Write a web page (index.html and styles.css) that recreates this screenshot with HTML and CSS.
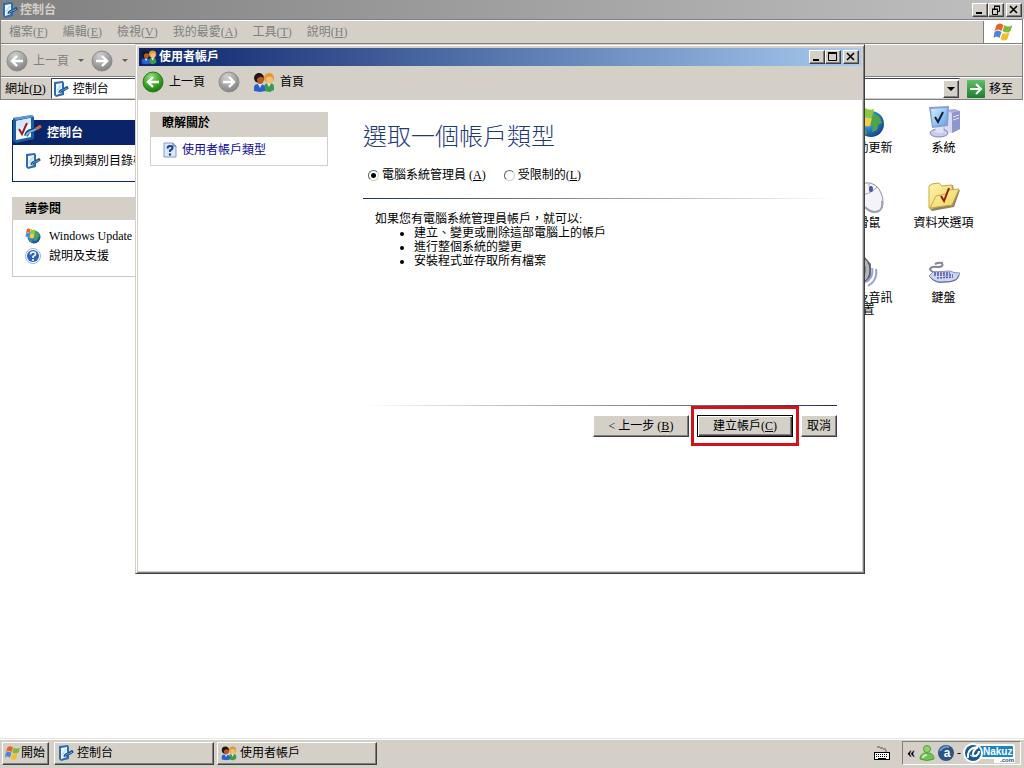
FILE: index.html
```
<!DOCTYPE html>
<html lang="zh-Hant">
<head>
  <meta charset="UTF-8" />
  <meta name="viewport" content="width=device-width, initial-scale=1.0"/>
  <title>使用者帳戶</title>
  <link rel="stylesheet" href="styles.css">
</head>
<body>
  <!-- Shared icons -->
  <svg class="defs" width="0" height="0" aria-hidden="true">
    <defs>
      <radialGradient id="greenBall" cx="40%" cy="25%" r="80%">
        <stop offset="0" stop-color="#9be07c"/><stop offset="0.5" stop-color="#3fae2c"/><stop offset="1" stop-color="#14700f"/>
      </radialGradient>
      <radialGradient id="grayBall" cx="40%" cy="25%" r="80%">
        <stop offset="0" stop-color="#d2d2d2"/><stop offset="0.5" stop-color="#a8a8a8"/><stop offset="1" stop-color="#7c7c7c"/>
      </radialGradient>
      <radialGradient id="blueBall" cx="35%" cy="30%" r="80%">
        <stop offset="0" stop-color="#8fd0f5"/><stop offset="0.5" stop-color="#2d7fc8"/><stop offset="1" stop-color="#123a80"/>
      </radialGradient>
      <linearGradient id="screen" x1="0" y1="0" x2="1" y2="1">
        <stop offset="0" stop-color="#d5f0ff"/><stop offset="1" stop-color="#58a8ea"/>
      </linearGradient>
      <linearGradient id="folder" x1="0" y1="0" x2="1" y2="1">
        <stop offset="0" stop-color="#fff6b0"/><stop offset="1" stop-color="#f0cf58"/>
      </linearGradient>
      <linearGradient id="goGreen" x1="0" y1="0" x2="0" y2="1">
        <stop offset="0" stop-color="#5fbf66"/><stop offset="1" stop-color="#1a7f2c"/>
      </linearGradient>
      <symbol id="panel" viewBox="0 0 30 30">
        <path d="M1 4 L20 1 L22 3 L22 25 L4 29 L1 27 Z" fill="#1d5c9e"/>
        <path d="M1 4 L20 1 L22 3 L4 6 Z" fill="#5b9bd8"/>
        <path d="M4 7 L19 4 L19 23 L4 26 Z" fill="#f2f8ff"/>
        <path d="M4 7 L19 4 L19 9 L4 17 Z" fill="#d5e8fa"/>
        <path d="M7 15 L10 20 L15 9" fill="none" stroke="#9c1f20" stroke-width="2"/>
        <path d="M14 22 C16 15 20 17 22 16 L28 13" fill="none" stroke="#123f78" stroke-width="4"/>
        <path d="M14 22 C16 16 20 18 24 15" fill="none" stroke="#6fb2e8" stroke-width="2"/>
        <path d="M24 15 L29 12" stroke="#d8643a" stroke-width="3"/>
      </symbol>
      <symbol id="panel-small" viewBox="0 0 16 16">
        <path d="M1 1 L10 0 L11 2 V14 L3 16 L1 14 Z" fill="#2f6cab"/>
        <path d="M3 3 L9 2 V12 L3 14 Z" fill="#eef7ff"/>
        <path d="M4 10 L8 4" stroke="#c3def5" stroke-width="2"/>
        <path d="M7 12 C7 8 10 10 12 8 L15 6" fill="none" stroke="#1d5088" stroke-width="3"/>
        <path d="M7 12 C8 8 10 10 14 7" fill="none" stroke="#79b5e6"/>
      </symbol>
      <symbol id="users" viewBox="0 0 22 20">
        <path d="M11 19 V14 Q12 11 16 11 Q21 11 21 15 V18 L17 20 Z" fill="#3d9a4e"/>
        <path d="M14 11 L16 15 L18 11 Z" fill="#e8f4e8"/>
        <circle cx="16" cy="6" r="5" fill="#e09a2c"/>
        <path d="M13 6 Q16 3 20 6 Q20 12 16 12 Q13 11 13 6" fill="#f3be7c"/>
        <path d="M1 19 V15 Q1 12 6 12 Q11 12 12 15 V19 L7 20 Z" fill="#2a5fcf"/>
        <path d="M5 12 L7 16 L9 12 Z" fill="#dcebff"/>
        <circle cx="6" cy="6" r="5" fill="#24150f"/>
        <path d="M4 7 Q7 3 11 6 Q11 12 7 12 Q4 12 4 7" fill="#b8592a"/>
      </symbol>
      <symbol id="back" viewBox="0 0 22 22">
        <circle cx="11" cy="11" r="10" fill="url(#greenBall)" stroke="#2c7a22"/>
        <path d="M17 11 H6 M11 6 L6 11 L11 16" fill="none" stroke="#fff" stroke-width="2.4"/>
      </symbol>
      <symbol id="back-off" viewBox="0 0 22 22">
        <circle cx="11" cy="11" r="10" fill="url(#grayBall)" stroke="#8c8c8c"/>
        <path d="M17 11 H6 M11 6 L6 11 L11 16" fill="none" stroke="#fff" stroke-width="2.4"/>
      </symbol>
      <symbol id="forward-off" viewBox="0 0 22 22">
        <circle cx="11" cy="11" r="10" fill="url(#grayBall)" stroke="#8c8c8c"/>
        <path d="M5 11 H16 M11 6 L16 11 L11 16" fill="none" stroke="#fff" stroke-width="2.4"/>
      </symbol>
      <symbol id="flag" viewBox="0 0 20 20">
        <path d="M3 3 Q6 0 10 3 L8 9 Q5 6 1 9 Z" fill="#e8622c"/>
        <path d="M11 3 Q15 6 19 3 L17 9 Q13 12 9 9 Z" fill="#7fb93a"/>
        <path d="M1 10 Q4 7 8 10 L6 16 Q3 13 0 16 Z" fill="#4d84d8"/>
        <path d="M9 11 Q12 13 16 10 L14 17 Q11 20 7 17 Z" fill="#f3bd2e"/>
      </symbol>
      <symbol id="globe" viewBox="0 0 32 32">
        <circle cx="18" cy="18" r="13" fill="url(#blueBall)"/>
        <path d="M21 8 Q27 9 29 17 L25 19 L24 24 L19 26 L20 20 L15 17 Z" fill="#4da546"/>
        <path d="M8 22 L13 24 L14 29 Q9 27 8 22" fill="#4da546"/>
        <path d="M4 2 Q7 0 11 2 L10 10 Q6 8 2 10 Z" fill="#e8622c"/>
        <path d="M12 2 Q16 5 21 3 L19 11 Q15 12 11 10 Z" fill="#8dcb34"/>
        <path d="M2 11 Q6 9 10 11 L8 19 Q5 16 1 18 Z" fill="#4a82dd"/>
        <path d="M11 11 Q15 13 19 12 L17 20 Q13 21 9 19 Z" fill="#f5cf3c"/>
      </symbol>
    </defs>
  </svg>

  <div class="explorer">
    <header class="titlebar titlebar-off">
      <svg class="icon16"><use href="#panel-small"/></svg>
      <span class="title">控制台</span>
      <div class="controls">
        <button aria-label="最小化"><svg viewBox="0 0 12 10"><path d="M2 8 H8" stroke="#000" stroke-width="2"/></svg></button>
        <button aria-label="還原"><svg viewBox="0 0 12 10"><path d="M4.5 4 V1.5 H9.500 V6.500 H8 M4 1 H10 M2.500 4.500 H7.500 V9.500 H2.500 Z M2 4 H8" fill="none" stroke="#000"/></svg></button>
        <button class="close" aria-label="關閉"><svg viewBox="0 0 12 10"><path d="M2 1 L9 8 M9 1 L2 8" stroke="#000" stroke-width="1.6"/></svg></button>
      </div>
    </header>

    <div class="bars">
      <nav class="menubar">
        <button>檔案(<u>F</u>)</button>
        <button>編輯(<u>E</u>)</button>
        <button>檢視(<u>V</u>)</button>
        <button>我的最愛(<u>A</u>)</button>
        <button>工具(<u>T</u>)</button>
        <button>說明(<u>H</u>)</button>
        <span class="brand"><svg width="21" height="20"><use href="#flag"/></svg></span>
      </nav>
      <div class="toolbar">
        <button><svg class="icon22"><use href="#back-off"/></svg>上一頁</button>
        <span class="drop"></span>
        <button aria-label="下一頁"><svg class="icon22"><use href="#forward-off"/></svg></button>
        <span class="drop"></span>
      </div>
      <div class="addressbar">
        <label for="address">網址(<u>D</u>)</label>
        <div class="combo">
          <svg class="icon16"><use href="#panel-small"/></svg>
          <select id="address"><option>控制台</option></select>
          <span class="combo-arrow"></span>
        </div>
        <button class="go">
          <svg width="18" height="18" viewBox="0 0 18 18">
            <rect width="18" height="18" rx="1" fill="url(#goGreen)"/>
            <path d="M3 9 H14 M9 4 L14 9 L9 14" fill="none" stroke="#fff" stroke-width="2"/>
          </svg>移至
        </button>
      </div>
    </div>

    <div class="folder">
      <aside class="side">
        <section class="box box-main">
          <h2><svg class="icon30"><use href="#panel"/></svg>控制台</h2>
          <a href="#"><svg class="icon16"><use href="#panel-small"/></svg>切換到類別目錄檢視</a>
        </section>
        <section class="box">
          <h2>請參閱</h2>
          <a href="#"><svg class="icon16"><use href="#globe"/></svg>Windows Update</a>
          <a href="#">
            <svg class="icon16" viewBox="0 0 16 16">
              <circle cx="8" cy="8" r="7.500" fill="#fff" stroke="#9ab4dc"/>
              <circle cx="8" cy="8" r="6" fill="#2f62c4"/>
              <path d="M5.5 6.5 Q5.5 4 8 4 Q10.5 4 10.5 6 Q10.5 7.500 8 8.500 V10" fill="none" stroke="#fff" stroke-width="1.600"/>
              <circle cx="8" cy="12" r="1" fill="#fff"/>
            </svg>說明及支援</a>
        </section>
      </aside>

      <div class="items">
        <a href="#"><svg class="icon32"><use href="#globe"/></svg>自動更新</a>
        <a href="#">
          <svg class="icon32" viewBox="0 0 32 32">
            <path d="M17 4 L27 3 L32 5 V23 L24 27 L16 24 Z" fill="#a9addc"/>
            <path d="M17 4 L24 7 V27 L16 24 Z" fill="#d9dbf3"/>
            <path d="M24 7 L32 5 V23 L24 27 Z" fill="#8f95cf"/>
            <path d="M25 11 L31 9 M25 14 L31 12" stroke="#e6e8fa"/>
            <path d="M8 21 H16 L18 26 Q14 30 6 27 Z" fill="#b3b7df"/>
            <ellipse cx="11" cy="27" rx="9" ry="4" fill="#c9cceb" stroke="#7a7fb4"/>
            <path d="M8 20 H15 L16 26 Q12 28 7 26 Z" fill="#dfe1f5"/>
            <path d="M1 1 L21 0 L20 20 L4 22 Z" fill="#8e9bd2"/>
            <path d="M3 3 L19 2 L18 18 L5 20 Z" fill="url(#screen)"/>
            <path d="M7 11 L10 16 L15 6" fill="none" stroke="#1b1b38" stroke-width="2"/>
          </svg>系統</a>
        <a href="#">
          <svg class="icon32" viewBox="0 0 32 32">
            <path d="M9 3 Q19 -1 26 8 Q32 18 29 27 Q24 33 16 30 Q6 24 6 12 Q6 6 9 3" fill="#f4f4f8" stroke="#8c8c9c"/>
            <path d="M29 20 Q30 27 26 30 Q19 33 12 26" fill="none" stroke="#a0a0b0" stroke-width="2"/>
            <path d="M7 13 Q16 15 24 6 M16 3 L17 12" fill="none" stroke="#a8a8c0"/>
            <ellipse cx="18" cy="8" rx="2" ry="3" fill="#4c55a8"/>
          </svg>滑鼠</a>
        <a href="#">
          <svg class="icon32" viewBox="0 0 32 32">
            <path d="M2 28 L1 5 L4 3 L11 2 L14 5 L25 4 L26 10 L32 9 L26 26 L4 30 Z" fill="#8f8460"/>
            <path d="M1 27 L1 5 L4 3 L11 2 L14 5 L24 4 L25 14 L4 28 Z" fill="url(#folder)" stroke="#c8a845"/>
            <path d="M2 27 L8 15 L18 13 L21 9 L31 8 L24 24 Z" fill="url(#folder)" stroke="#c8a845"/>
            <path d="M13 15 L16 20 L21 7" fill="none" stroke="#8f1d10" stroke-width="2"/>
          </svg>資料夾選項</a>
        <a href="#" class="wide">
          <svg class="icon32" viewBox="0 0 32 32">
            <path d="M6 3 L18 1 L24 8 V21 L18 27 L6 26 Z" fill="#74747c"/>
            <ellipse cx="15" cy="14" rx="8" ry="12" fill="#b4b4bc" stroke="#4c4c54"/>
            <ellipse cx="14" cy="14" rx="5" ry="8" fill="#7c7c86"/>
            <path d="M25 12 Q27 21 19 26 M29 13 Q31 24 21 30" fill="none" stroke="#9a9fd4" stroke-width="2"/>
          </svg>聲音及音訊<br>裝置</a>
        <a href="#">
          <svg class="icon32" viewBox="0 0 32 32">
            <path d="M13 17 Q3 17 2 13 Q3 10 10 11 Q16 11 14 7 Q11 6 7 8" fill="none" stroke="#85858f" stroke-width="2"/>
            <path d="M1 20 L5 16 L22 15 Q25 17 32 17 L29 23 Q22 27 14 26 Q6 26 1 20" fill="#cfd6f4" stroke="#8690bd"/>
            <path d="M2 21 Q8 28 16 26 Q26 26 29 23 L31 19" fill="none" stroke="#5f6a9c"/>
            <path d="M6 17 L22 17 M6 19 L25 19 M9 22 L25 21" stroke="#4b5ba8" stroke-width="1.500" stroke-dasharray="2 1"/>
            <path d="M13 16 L18 21" stroke="#d07080" stroke-dasharray="2 1"/>
          </svg>鍵盤</a>
      </div>
    </div>
  </div>

  <div class="dialog" role="dialog" aria-labelledby="dialogTitle">
    <header class="titlebar">
      <svg class="icon16"><use href="#users"/></svg>
      <span class="title" id="dialogTitle">使用者帳戶</span>
      <div class="controls">
        <button aria-label="最小化"><svg viewBox="0 0 12 10"><path d="M2 8 H8" stroke="#000" stroke-width="2"/></svg></button>
        <button aria-label="最大化"><svg viewBox="0 0 12 10"><path d="M1.500 1 V8.500 H9.500 V1" fill="none" stroke="#000"/><path d="M1 1 H10" stroke="#000" stroke-width="2"/></svg></button>
        <button class="close" aria-label="關閉"><svg viewBox="0 0 12 10"><path d="M2 1 L9 8 M9 1 L2 8" stroke="#000" stroke-width="1.600"/></svg></button>
      </div>
    </header>
    <div class="dialog-toolbar">
      <button><svg class="icon22"><use href="#back"/></svg>上一頁</button>
      <button aria-label="下一頁"><svg class="icon22"><use href="#forward-off"/></svg></button>
      <button><svg class="icon22"><use href="#users"/></svg>首頁</button>
    </div>
    <div class="dialog-body">
      <aside class="learn">
        <h2>瞭解關於</h2>
        <a href="#">
          <svg class="icon16" viewBox="0 0 16 16">
            <path d="M2 1 H11 L14 4 V15 H2 Z" fill="#d9e8fa" stroke="#7f9cc8"/>
            <path d="M11 1 V4 H14" fill="#a9c4e8" stroke="#5b7fb8"/>
            <path d="M5.500 6.500 Q5.500 4 8 4 Q10.500 4 10.500 6 Q10.500 7.500 8 8.500 V10" fill="none" stroke="#1d3f94" stroke-width="2"/>
            <circle cx="8" cy="12.500" r="1.200" fill="#1d3f94"/>
          </svg>使用者帳戶類型</a>
      </aside>
      <form class="account">
        <h1>選取一個帳戶類型</h1>
        <div class="choices">
          <label><input type="radio" name="kind" checked>電腦系統管理員 (<u>A</u>)</label>
          <label><input type="radio" name="kind">受限制的(<u>L</u>)</label>
        </div>
        <div class="rule"></div>
        <div class="rights">
          <p>如果您有電腦系統管理員帳戶，就可以:</p>
          <ul>
            <li>建立、變更或刪除這部電腦上的帳戶</li>
            <li>進行整個系統的變更</li>
            <li>安裝程式並存取所有檔案</li>
          </ul>
        </div>
        <div class="rule rule-end"></div>
        <div class="actions">
          <button type="button" class="step">&lt; 上一步 (<u>B</u>)</button>
          <span class="marked"><button type="button" class="step default">建立帳戶(<u>C</u>)</button></span>
          <button type="button">取消</button>
        </div>
      </form>
    </div>
  </div>

  <footer class="taskbar">
    <button class="start"><svg class="icon16"><use href="#flag"/></svg>開始</button>
    <button class="task"><svg class="icon16"><use href="#panel-small"/></svg>控制台</button>
    <button class="task"><svg class="icon16"><use href="#users"/></svg>使用者帳戶</button>
    <svg class="keyboard" width="16" height="14" viewBox="0 0 16 14">
      <path d="M3 1 H6 M6 2 H9 M9 3 H12 M12 4 V6" fill="none" stroke="#555"/>
      <rect x="0.500" y="6.500" width="15" height="7" fill="#fff" stroke="#000"/>
      <path d="M2 8.500 H14 M2 10.500 H14" stroke="#000" stroke-dasharray="1 1"/>
      <path d="M4 12.500 H12" stroke="#000"/>
    </svg>
    <div class="tray">
      <span class="more">«</span>
      <svg class="icon16" viewBox="0 0 16 16">
        <path d="M1 14 Q1 9 6 8 H10 Q15 9 15 14 Q8 17 1 14" fill="#72c156" stroke="#4f9c42"/>
        <circle cx="8" cy="4" r="3.500" fill="#8fd56c" stroke="#4f9c42"/>
        <path d="M4 13 Q4 10 8 10" fill="none" stroke="#c8f0b0" stroke-width="2"/>
      </svg>
      <svg class="icon16" viewBox="0 0 16 16">
        <circle cx="8" cy="8" r="8" fill="#2b5487"/>
        <path d="M2 6 Q5 1 11 2" fill="none" stroke="#7096c0" stroke-width="2"/>
        <text x="9" y="12" class="letter">a</text>
      </svg>
      <span class="dash">-</span>
      <svg class="logo" width="54" height="22" viewBox="0 0 54 22">
        <rect x="14" y="3" width="38" height="13" rx="2" fill="#1b86c2" stroke="#fff" stroke-width="2"/>
        <rect x="32" y="15" width="21" height="6" fill="#fff"/>
        <circle cx="11" cy="11" r="10" fill="#fff"/>
        <circle cx="11" cy="11" r="8" fill="#155a94"/>
        <path d="M6 16 Q5 9 11 6 L16 5 Q12 7 11 11 Q10 14 14 14 Q17 12 17 9" fill="none" stroke="#fff" stroke-width="2"/>
        <path d="M8 13 Q11 16 15 14" fill="none" stroke="#fff"/>
        <text x="21" y="13" class="logo-name">Nakuz</text>
        <text x="38" y="20" class="logo-com">.com</text>
      </svg>
    </div>
  </footer>
</body>
</html>
```

FILE: styles.css
```
* {
  box-sizing: border-box;
}

body {
  margin: 0;
  height: 100vh;
  display: flex;
  flex-direction: column;
  position: relative;
  overflow: hidden;
  font-family: "Liberation Serif", "Noto Sans CJK TC", sans-serif;
  font-size: 12px;
  line-height: 14px;
  color: #000;
  background: #fff;
}

h1, h2, p, ul {
  margin: 0;
  padding: 0;
}

button, select, input {
  font: inherit;
  color: inherit;
  margin: 0;
}

button {
  padding: 0;
  border: none;
  background: none;
  white-space: nowrap;
}

a {
  color: inherit;
  text-decoration: none;
}

svg {
  flex: none;
}

.defs { position: absolute; }
.icon16 { width: 16px; height: 16px; }
.icon22 { width: 22px; height: 22px; }
.icon30 { width: 30px; height: 30px; }
.icon32 { width: 32px; height: 32px; }

/* Title bars */
.titlebar {
  display: flex;
  align-items: center;
  gap: 2px;
  height: 18px;
  padding: 0 2px;
  color: #fff;
  font-weight: bold;
  background: linear-gradient(to right, #0a246a, #a6caf0);
}

.titlebar-off {
  color: #d4d0c8;
  height: 19px;
  background: linear-gradient(to right, #808080, #c0c0c0);
}

.title { flex: 1; }
.controls { display: flex; }

.controls button,
.start,
.task,
.actions button,
.combo-arrow {
  background: #d4d0c8;
  border: 1px solid;
  border-color: #fff #404040 #404040 #fff;
  box-shadow: inset -1px -1px #808080;
}

.controls button {
  width: 16px;
  height: 14px;
  display: flex;
  align-items: center;
  justify-content: center;
}

.controls svg {
  width: 12px;
  height: 10px;
}

.controls .close { margin-left: 2px; }

/* Explorer window */
.explorer {
  flex: 1;
  min-height: 0;
  display: flex;
  flex-direction: column;
}

.bars {
  margin-right: 1px;
  background: #d4d0c8;
  border: 1px solid #808080;
}

.menubar {
  display: flex;
  gap: 15px;
  height: 24px;
  padding-left: 8px;
  color: #808080;
  border-top: 1px solid #fff;
  border-bottom: 1px solid #808080;
}

.brand {
  width: 39px;
  margin-left: auto;
  display: flex;
  align-items: center;
  justify-content: center;
  background: #fff;
  border-left: 1px solid #808080;
}

.toolbar {
  display: flex;
  align-items: center;
  gap: 7px;
  height: 33px;
  padding-left: 5px;
  color: #808080;
  border-top: 1px solid #fff;
  border-bottom: 1px solid #808080;
}

.toolbar button,
.dialog-toolbar button {
  display: flex;
  align-items: center;
  gap: 5px;
}

.drop {
  margin-left: 2px;
  border: 3px solid transparent;
  border-top-color: #606060;
  border-bottom: none;
}

.addressbar {
  display: flex;
  align-items: center;
  height: 22px;
  padding-left: 4px;
  border-top: 1px solid #fff;
}

.combo {
  flex: 1;
  display: flex;
  align-items: center;
  height: 21px;
  margin: 0 7px 0 5px;
  padding-left: 1px;
  background: #fff;
  border: 1px solid;
  border-color: #404040 #d4d0c8 #d4d0c8 #404040;
}

.combo select {
  flex: 1;
  padding: 0 4px;
  border: none;
  background: none;
  appearance: none;
}

.combo-arrow {
  width: 16px;
  height: 18px;
  display: flex;
  align-items: center;
  justify-content: center;
}

.combo-arrow::after {
  content: "";
  border: 4px solid transparent;
  border-top-color: #000;
  border-bottom: none;
}

.go {
  display: flex;
  align-items: center;
  gap: 4px;
  padding-right: 9px;
}

.folder {
  flex: 1;
  display: flex;
  justify-content: space-between;
}

.side {
  width: 185px;
  margin: 20px 0 0 12px;
}

.box {
  margin-bottom: 15px;
  padding-bottom: 10px;
  border: 1px solid #c8c8c8;
}

.box h2 {
  display: flex;
  align-items: center;
  height: 23px;
  margin: -1px -1px 6px;
  padding-left: 13px;
  font-size: 12px;
  background: #d4d0c8;
}

.box a {
  display: flex;
  align-items: center;
  gap: 8px;
  height: 20px;
  padding-left: 12px;
  white-space: nowrap;
}

.box-main {
  border-color: #0a246a;
}

.box-main h2 {
  gap: 5px;
  height: 25px;
  padding-left: 0;
  color: #fff;
  background: #0a246a;
}

.box-main .icon30 {
  margin-top: -8px;
}

.items {
  display: grid;
  grid-template-columns: 75px 75px;
  grid-auto-rows: 75px;
  margin: 6px 43px 0 0;
  line-height: 12px;
}

.items a {
  display: block;
  text-align: center;
  white-space: nowrap;
}

.items svg {
  display: block;
  margin: 0 auto 4px;
}

.items .wide {
  padding-right: 12px;
}

/* User accounts window */
.dialog {
  position: absolute;
  top: 44px;
  right: 159px;
  bottom: 194px;
  left: 135px;
  display: flex;
  flex-direction: column;
  padding: 2px;
  background: #d4d0c8;
  border: 1px solid;
  border-color: #d4d0c8 #404040 #404040 #d4d0c8;
  box-shadow: inset 1px 1px #fff, inset -1px -1px #808080;
}

.dialog .titlebar {
  margin: 1px 1px 0;
}

.dialog-toolbar {
  display: flex;
  align-items: center;
  gap: 13px;
  height: 34px;
  padding: 0 4px 2px;
}

.dialog-body {
  flex: 1;
  display: flex;
  align-items: flex-start;
  gap: 35px;
  padding: 12px 25px 0 12px;
  background: #fff;
}

.learn {
  width: 178px;
  border: 1px solid #d4d0c8;
}

.learn h2 {
  height: 24px;
  padding: 3px 11px;
  font-size: 12px;
  background: #d4d0c8;
}

.learn a {
  display: flex;
  align-items: center;
  gap: 4px;
  height: 28px;
  padding: 0 0 2px 11px;
  color: #0a0a9a;
}

.account {
  flex: 1;
  padding-top: 10px;
}

.account h1 {
  font-size: 24px;
  font-weight: 300;
  line-height: 30px;
  color: #1f3a78;
}

.choices {
  display: flex;
  gap: 18px;
  margin: 16px 0 16px 5px;
}

.choices label {
  display: flex;
  align-items: center;
  white-space: pre;
}

.choices input {
  appearance: none;
  width: 11px;
  height: 11px;
  margin-right: 3px;
  border: 1px solid;
  border-color: #606060 #d4d0c8 #d4d0c8 #606060;
  border-radius: 50%;
}

.choices input:checked {
  background: radial-gradient(circle, #000 2px, #fff 3px);
}

.rule {
  height: 1px;
  background: linear-gradient(to right, #20305c, #fff);
}

.rule-end {
  background: linear-gradient(to left, #20305c, #fff);
}

.rights {
  min-height: 206px;
  padding: 13px 0 0 12px;
}

.rights ul {
  padding-left: 39px;
}

.actions {
  display: flex;
  justify-content: flex-end;
  align-items: center;
  gap: 2px;
}

.actions button {
  height: 22px;
  padding: 0 5px;
}

.actions .step {
  width: 96px;
}

.actions .default {
  border-color: #000;
  box-shadow: inset 1px 1px #fff, inset -1px -1px #404040, inset -2px -2px #808080;
}

.marked {
  padding: 6px 3px;
  border: 3px solid #d41018;
}

/* Taskbar */
.taskbar {
  display: flex;
  align-items: center;
  gap: 3px;
  height: 30px;
  padding: 0 3px 1px 2px;
  background: #d4d0c8;
  border-top: 1px solid #e8e6e0;
  box-shadow: inset 0 1px #fff;
}

.start,
.task {
  display: flex;
  align-items: center;
  height: 23px;
  padding-left: 2px;
}

.start {
  gap: 0;
  width: 47px;
  margin-right: 2px;
}

.task {
  gap: 3px;
  width: 160px;
  padding-left: 3px;
}

.keyboard {
  margin: 0 9px 0 auto;
}

.tray {
  display: flex;
  align-items: center;
  gap: 3px;
  width: 119px;
  height: 24px;
  padding-left: 4px;
  border: 1px solid;
  border-color: #808080 #fff #fff #808080;
}

.more {
  width: 9px;
  font-size: 16px;
  font-weight: bold;
}

.letter {
  font: bold 12px "Liberation Sans", sans-serif;
  fill: #fff;
  text-anchor: middle;
}

.logo {
  margin-left: -2px;
}

.logo-name {
  font: bold 10px "Liberation Sans", sans-serif;
  fill: #fff;
}

.logo-com {
  font: bold 6px "Liberation Sans", sans-serif;
  fill: #155a94;
}
```
